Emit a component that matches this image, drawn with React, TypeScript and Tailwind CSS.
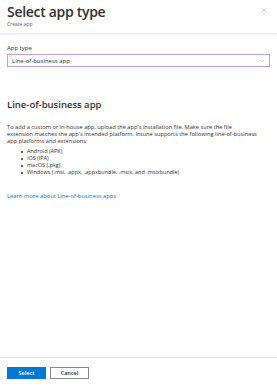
import { X, ChevronDown } from "lucide-react";

const bullets = [
  "Android (APK)",
  "iOS (IPA)",
  "macOS (.pkg)",
  "Windows (.msi, .appx, .appxbundle, .msix, and .msixbundle)",
];

export default function App() {
  return (
    <div className="flex h-[389px] w-[277px] flex-col bg-white font-['Open_Sans',sans-serif] text-[#323130]">
      {/* header */}
      <div className="relative border-b border-[#e8e8e8] px-[7px] pt-[3px] pb-[5px] shadow-[0_1px_2px_rgba(0,0,0,0.06)]">
        <h1 className="text-[14px] leading-[18px] font-semibold tracking-[-0.3px]">Select app type</h1>
        <p className="text-[5px] leading-[7px] text-[#605e5c]">Create app</p>
        <X className="absolute top-[7px] right-[10px] h-[6px] w-[6px] text-[#8a8886]" strokeWidth={1.5} />
      </div>

      <div className="flex flex-1 flex-col px-[7px]">
        <label className="mt-[10px] text-[6px] leading-[8px]">App type</label>
        <div className="mt-[2px] flex h-[13px] items-center justify-between border border-[#c39fd9] px-[4px]">
          <span className="text-[6px] leading-[8px]">Line-of-business app</span>
          <ChevronDown className="h-[6px] w-[6px] text-[#605e5c]" strokeWidth={1.5} />
        </div>

        <h2 className="mt-[32px] text-[9.5px] leading-[12px] font-semibold">Line-of-business app</h2>

        <p className="mt-[13px] text-[5.7px] leading-[7px]">
          To add a custom or in-house app, upload the app's installation file. Make sure the file
          <br />
          extension matches the app's intended platform. Intune supports the following line-of-business
          <br />
          app platforms and extensions:
        </p>

        <ul className="mt-[3px] pl-[14px] text-[5.5px] leading-[7px]">
          {bullets.map((b) => (
            <li key={b} className="flex items-center gap-[4px]">
              <span className="h-[2px] w-[2px] rounded-full bg-[#323130]" />
              {b}
            </li>
          ))}
        </ul>

        <a className="mt-[17px] text-[5.8px] leading-[7px] text-[#0078d4]">Learn more about Line-of-business apps</a>
      </div>

      {/* footer */}
      <div className="flex gap-[4px] border-t border-[#e8e8e8] px-[7px] pt-[9px] pb-[10px]">
        <button className="flex h-[12px] w-[39px] items-center justify-center bg-[#0078d4] text-[5.5px] font-semibold text-white">
          Select
        </button>
        <button className="flex h-[12px] w-[39px] items-center justify-center border border-[#8a8886] bg-white text-[5.5px] font-semibold text-[#323130]">
          Cancel
        </button>
      </div>
    </div>
  );
}
